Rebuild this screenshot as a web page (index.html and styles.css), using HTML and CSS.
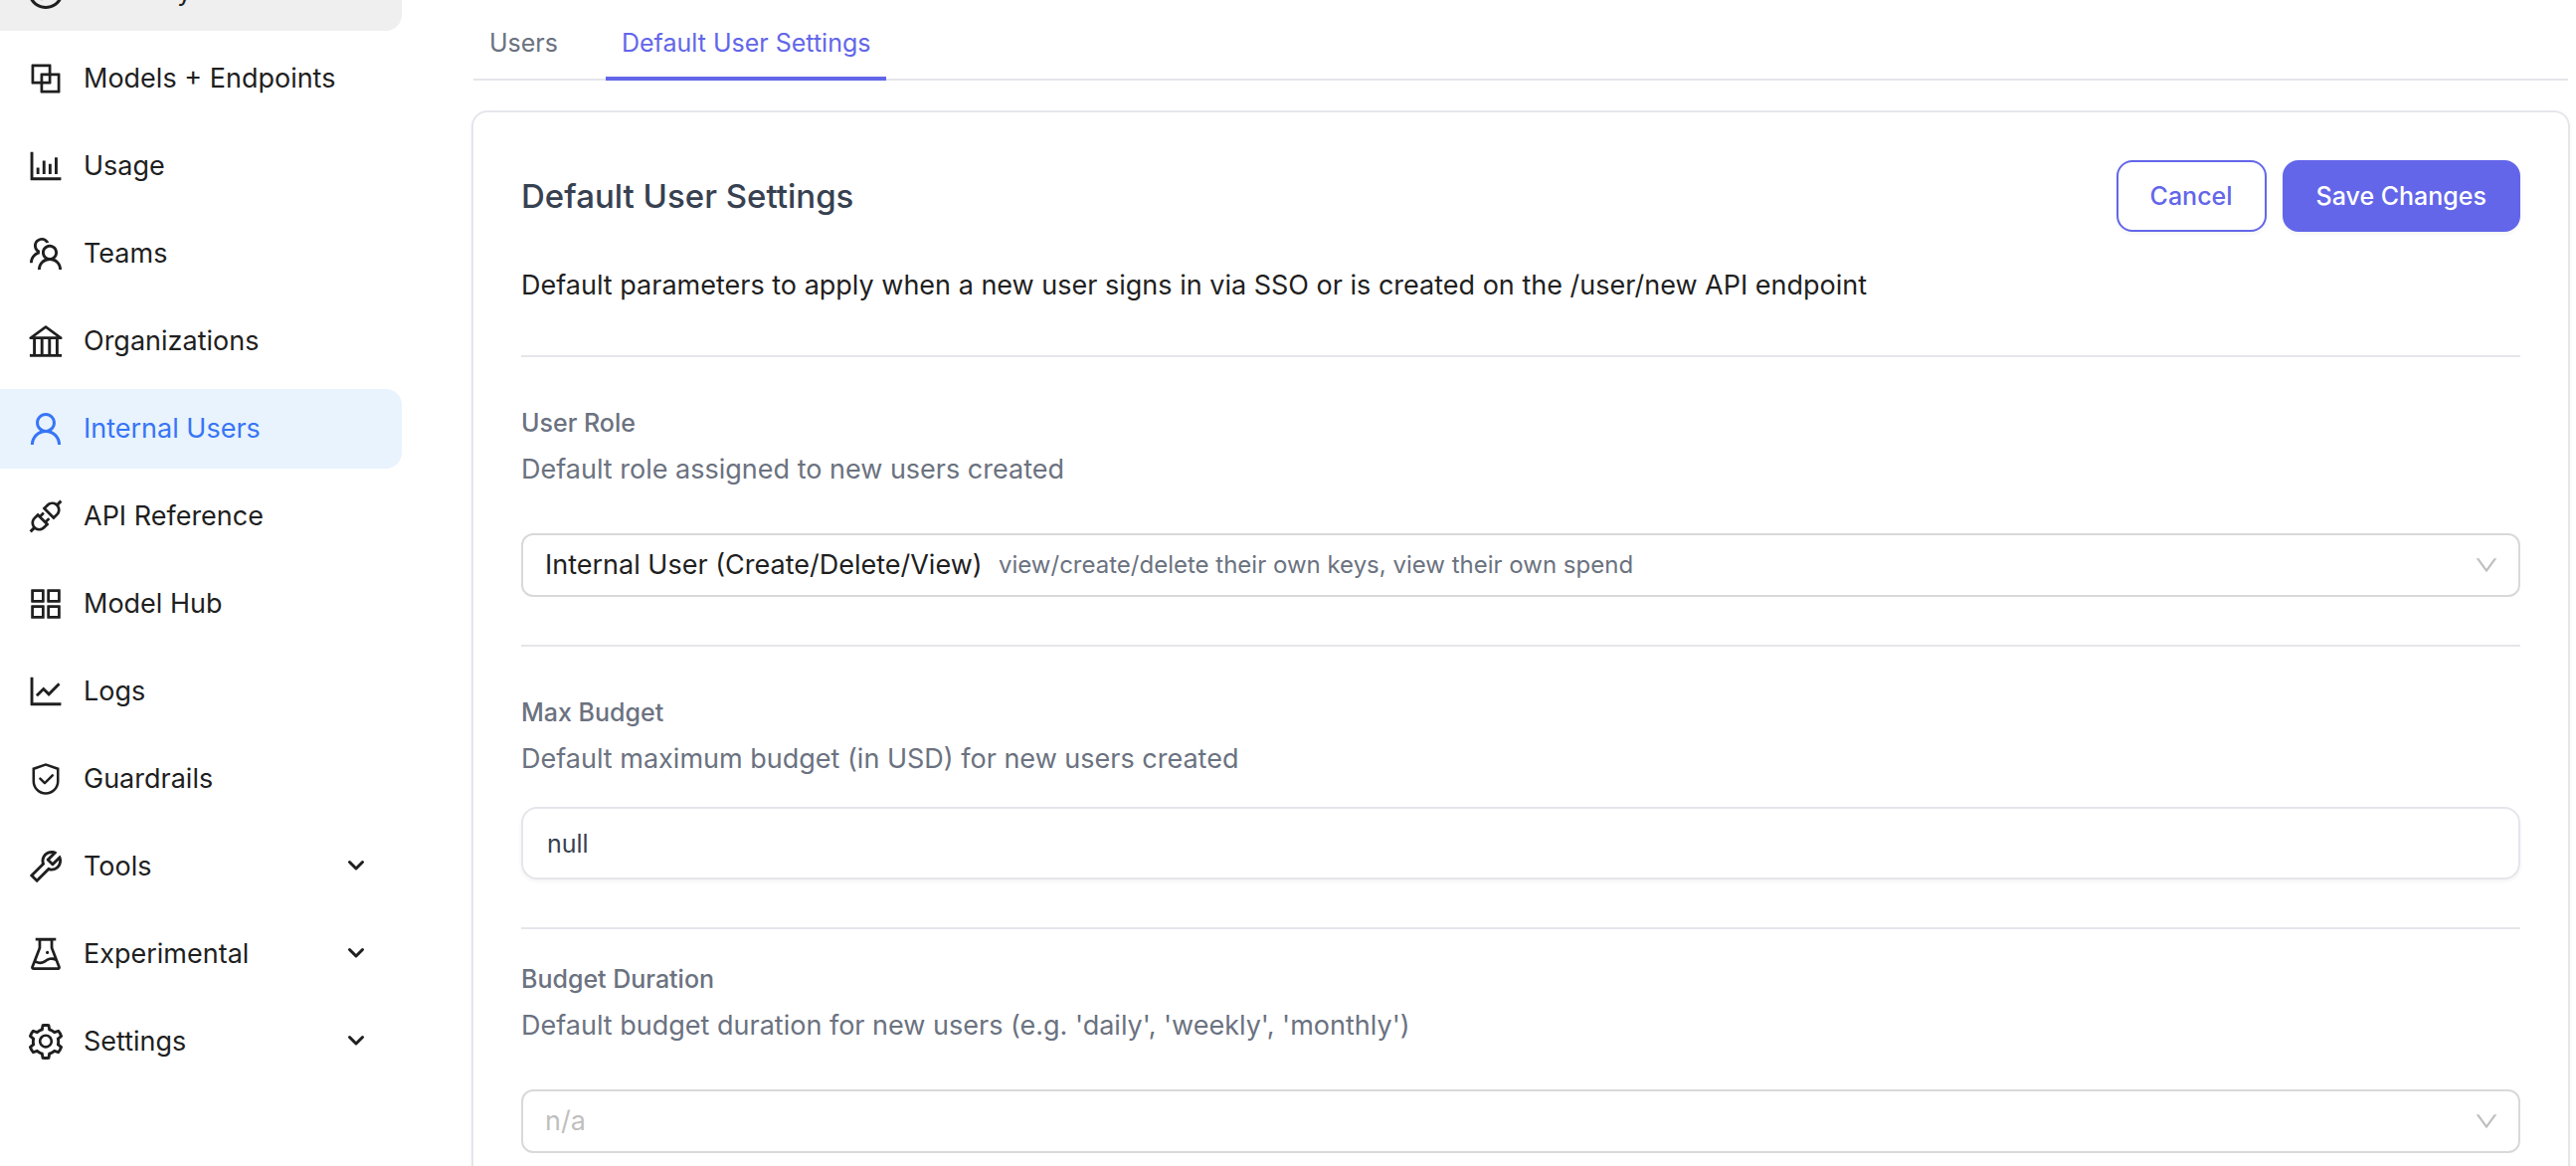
FILE: index.html
```html
<!DOCTYPE html>
<html lang="en">
<head>
<meta charset="utf-8">
<meta name="viewport" content="width=device-width, initial-scale=1">
<title>Default User Settings</title>
<link rel="stylesheet" href="styles.css">
</head>
<body>
<div class="app">
  <nav class="sidebar" aria-label="Main">
    <a class="nav-item nav-item-hover" href="#test-key">
      <svg class="icon" viewBox="64 64 896 896" aria-hidden="true"><path d="M512 64C264.600 64 64 264.600 64 512s200.600 448 448 448 448-200.600 448-448S759.400 64 512 64zm0 820c-205.400 0-372-166.600-372-372s166.600-372 372-372 372 166.600 372 372-166.600 372-372 372z"/><path d="M719.400 499.100l-296.100-215A15.900 15.900 0 00398 297v430c0 13.100 14.800 20.500 25.300 12.900l296.100-215a15.900 15.900 0 000-25.800zm-257.600 134V390.900L628.500 512 461.800 633.100z"/></svg>
      <span>Test Key</span>
    </a>
    <a class="nav-item" href="#models">
      <svg class="icon" viewBox="64 64 896 896" aria-hidden="true"><path d="M856 376H648V168c0-8.800-7.200-16-16-16H168c-8.800 0-16 7.200-16 16v464c0 8.800 7.200 16 16 16h208v208c0 8.800 7.200 16 16 16h464c8.800 0 16-7.200 16-16V392c0-8.800-7.200-16-16-16zm-480 16v188H220V220h360v156H392c-8.800 0-16 7.200-16 16zm204 52v136H444V444h136zm224 360H444V648h188c8.800 0 16-7.200 16-16V444h156v360z"/></svg>
      <span>Models + Endpoints</span>
    </a>
    <a class="nav-item" href="#usage">
      <svg class="icon" viewBox="64 64 896 896" aria-hidden="true"><path d="M888 792H200V168c0-4.400-3.600-8-8-8h-56c-4.400 0-8 3.600-8 8v688c0 4.400 3.600 8 8 8h752c4.400 0 8-3.600 8-8v-56c0-4.400-3.600-8-8-8zm-600-80h56c4.400 0 8-3.600 8-8V560c0-4.400-3.600-8-8-8h-56c-4.400 0-8 3.600-8 8v144c0 4.400 3.600 8 8 8zm152 0h56c4.400 0 8-3.600 8-8V384c0-4.400-3.600-8-8-8h-56c-4.400 0-8 3.600-8 8v320c0 4.400 3.600 8 8 8zm152 0h56c4.400 0 8-3.600 8-8V462c0-4.400-3.600-8-8-8h-56c-4.400 0-8 3.600-8 8v242c0 4.400 3.600 8 8 8zm152 0h56c4.400 0 8-3.600 8-8V304c0-4.400-3.600-8-8-8h-56c-4.400 0-8 3.600-8 8v400c0 4.400 3.600 8 8 8z"/></svg>
      <span>Usage</span>
    </a>
    <a class="nav-item" href="#teams">
      <svg class="icon" viewBox="64 64 896 896" aria-hidden="true"><path d="M824.2 699.9a301.55 301.55 0 00-86.400-60.400C783.100 602.800 812 546.800 812 484c0-110.800-92.400-201.700-203.200-200-109.100 1.700-197 90.600-197 200 0 62.800 29 118.800 74.200 155.500a300.95 300.95 0 00-86.400 60.400C345 754.600 314 826.800 312 903.800a8 8 0 008 8.200h56c4.300 0 7.900-3.400 8-7.700 1.900-58 25.400-112.300 66.700-153.500A226.62 226.62 0 01612 684c60.900 0 118.200 23.700 161.300 66.800C814.600 792 838 846.300 840 904.300c.1 4.300 3.700 7.700 8 7.700h56a8 8 0 008-8.200c-2-77-33-149.200-87.800-203.900zM612 612c-34.200 0-66.400-13.300-90.500-37.500a126.86 126.86 0 01-37.500-91.800c.3-32.800 13.400-64.500 36.300-88 24-24.600 56.100-38.300 90.400-38.700 33.900-.3 66.800 12.900 91 36.600 24.800 24.300 38.400 56.800 38.400 91.400 0 34.200-13.300 66.300-37.500 90.500A127.3 127.3 0 01612 612zM361.500 510.400c-.9-8.700-1.400-17.500-1.400-26.400 0-15.900 1.500-31.400 4.300-46.500.7-3.600-1.200-7.300-4.500-8.800-13.600-6.100-26.100-14.500-36.900-25.100a127.54 127.54 0 01-38.700-95.400c.9-32.100 13.800-62.600 36.300-85.600 24.700-25.300 57.900-39.100 93.200-38.700 31.900.3 62.700 12.600 86 34.400 7.900 7.400 14.700 15.600 20.400 24.400 2 3.100 5.900 4.400 9.300 3.200 17.600-6.100 36.200-10.400 55.300-12.400 5.600-.6 8.800-6.600 6.300-11.600-32.500-64.300-98.900-108.700-175.700-109.900-110.900-1.700-203.300 89.200-203.300 199.900 0 62.800 28.900 118.800 74.200 155.500-31.800 14.700-61.100 35-86.500 60.400-54.800 54.700-85.800 126.900-87.800 204a8 8 0 008 8.200h56.100c4.300 0 7.900-3.400 8-7.700 1.900-58 25.400-112.300 66.700-153.500 29.400-29.400 65.400-49.800 104.700-59.700 3.900-1 6.500-4.700 6-8.700z"/></svg>
      <span>Teams</span>
    </a>
    <a class="nav-item" href="#organizations">
      <svg class="icon" viewBox="64 64 896 896" aria-hidden="true"><path d="M894 462c30.900 0 43.800-39.700 18.700-58L530.800 126.200a31.81 31.81 0 00-37.600 0L111.300 404c-25.100 18.200-12.200 58 18.800 58H192v374h-72c-4.400 0-8 3.600-8 8v52c0 4.400 3.600 8 8 8h784c4.400 0 8-3.600 8-8v-52c0-4.400-3.600-8-8-8h-72V462h62zM512 196.700l271.100 197.200H240.900L512 196.700zM264 462h117v374H264V462zm189 0h117v374H453V462zm307 374H642V462h118v374z"/></svg>
      <span>Organizations</span>
    </a>
    <a class="nav-item nav-item-active" href="#internal-users" aria-current="page">
      <svg class="icon" viewBox="64 64 896 896" aria-hidden="true"><path d="M858.500 763.600a374 374 0 00-80.600-119.500 375.63 375.63 0 00-119.500-80.600c-.4-.2-.8-.3-1.200-.5C719.500 518 760 444.700 760 362c0-137-111-248-248-248S264 225 264 362c0 82.700 40.500 156 102.800 201.100-.4.2-.8.3-1.200.5-44.800 18.900-85 46-119.500 80.600a375.63 375.63 0 00-80.600 119.500A371.7 371.7 0 00136 901.800a8 8 0 008 8.200h60c4.400 0 7.900-3.500 8-7.800 2-77.200 33-149.500 87.800-204.300 56.700-56.700 132-87.900 212.200-87.900s155.500 31.200 212.200 87.900C779 752.700 810 825 812 902.200c.1 4.400 3.600 7.800 8 7.800h60a8 8 0 008-8.200c-1-47.800-10.900-94.300-29.500-138.200zM512 534c-45.900 0-89.100-17.900-121.600-50.400S340 407.900 340 362c0-45.900 17.900-89.100 50.400-121.600S466.100 190 512 190s89.100 17.900 121.600 50.400S684 316.100 684 362c0 45.900-17.900 89.100-50.400 121.600S557.900 534 512 534z"/></svg>
      <span>Internal Users</span>
    </a>
    <a class="nav-item" href="#api-reference">
      <svg class="icon" viewBox="64 64 896 896" aria-hidden="true"><path d="M917.700 148.800l-42.400-42.400c-1.600-1.600-3.600-2.300-5.700-2.300s-4.100.8-5.700 2.300l-76.100 76.100a199.27 199.27 0 00-112.100-34.300c-51.200 0-102.400 19.500-141.500 58.600L432.300 308.700a8.030 8.030 0 000 11.300L704 591.700c1.600 1.600 3.600 2.300 5.700 2.300 2 0 4.100-.8 5.700-2.300l101.900-101.900c68.900-69 77-175.700 24.300-253.500l76.100-76.100c3.100-3.200 3.100-8.300 0-11.400zM769.100 441.700l-59.400 59.400-186.800-186.800 59.400-59.400c24.900-24.900 58.100-38.700 93.400-38.700 35.300 0 68.400 13.700 93.400 38.700 24.900 24.900 38.700 58.100 38.700 93.400 0 35.300-13.800 68.400-38.700 93.400zm-190.200 105a8.030 8.030 0 00-11.300 0L501 613.300 410.700 523l66.700-66.700c3.100-3.100 3.100-8.200 0-11.300L441 408.600a8.030 8.030 0 00-11.300 0L363 475.300l-43-43a7.85 7.85 0 00-5.700-2.300c-2 0-4.100.8-5.700 2.300L206.800 534.200c-68.900 69-77 175.700-24.300 253.500l-76.100 76.100a8.030 8.030 0 000 11.300l42.400 42.400c1.600 1.600 3.600 2.300 5.700 2.300s4.100-.8 5.700-2.300l76.100-76.100c33.700 22.900 72.900 34.300 112.100 34.300 51.200 0 102.400-19.500 141.500-58.600l101.900-101.900c3.100-3.100 3.100-8.200 0-11.300l-43-43 66.700-66.700c3.100-3.100 3.100-8.200 0-11.300l-36.600-36.200zM441.700 769.100a131.32 131.32 0 01-93.400 38.700c-35.300 0-68.400-13.700-93.400-38.700a131.32 131.32 0 01-38.700-93.400c0-35.300 13.700-68.400 38.700-93.400l59.400-59.400 186.800 186.800-59.400 59.400z"/></svg>
      <span>API Reference</span>
    </a>
    <a class="nav-item" href="#model-hub">
      <svg class="icon" viewBox="64 64 896 896" aria-hidden="true"><path fill-rule="evenodd" d="M160 144h304q16 0 16 16v304q0 16-16 16H160q-16 0-16-16V160q0-16 16-16zm52 68v200h200V212zM560 144h304q16 0 16 16v304q0 16-16 16H560q-16 0-16-16V160q0-16 16-16zm52 68v200h200V212zM160 544h304q16 0 16 16v304q0 16-16 16H160q-16 0-16-16V560q0-16 16-16zm52 68v200h200V612zM560 544h304q16 0 16 16v304q0 16-16 16H560q-16 0-16-16V560q0-16 16-16zm52 68v200h200V612z"/></svg>
      <span>Model Hub</span>
    </a>
    <a class="nav-item" href="#logs">
      <svg class="icon" viewBox="64 64 896 896" aria-hidden="true"><path d="M888 792H200V168c0-4.400-3.600-8-8-8h-56c-4.400 0-8 3.600-8 8v688c0 4.400 3.600 8 8 8h752c4.400 0 8-3.600 8-8v-56c0-4.400-3.600-8-8-8zM305.800 637.700c3.100 3.100 8.100 3.100 11.300 0l138.300-137.600L583 628.500c3.100 3.100 8.200 3.100 11.300 0l275.400-275.300c3.100-3.100 3.100-8.200 0-11.300l-39.600-39.600a8.030 8.030 0 00-11.300 0l-230 229.900L461.400 404a8.030 8.030 0 00-11.300 0L266.300 586.700a8.030 8.030 0 000 11.300l39.500 39.700z"/></svg>
      <span>Logs</span>
    </a>
    <a class="nav-item" href="#guardrails">
      <svg class="icon" viewBox="0 0 1024 1024" aria-hidden="true"><path d="M512 64L128 192v384c0 212.100 171.900 384 384 384s384-171.900 384-384V192L512 64zm312 512c0 172.300-139.700 312-312 312S200 748.300 200 576V246l312-110 312 110v330z"/><path d="M378.400 475.100a35.91 35.91 0 00-50.900 0 35.91 35.91 0 000 50.900l129.400 129.400 2.100 2.100a33.98 33.98 0 0048.100 0L730.600 434a33.98 33.98 0 000-48.100l-2.800-2.800a33.98 33.98 0 00-48.100 0L483 579.700 378.400 475.100z"/></svg>
      <span>Guardrails</span>
    </a>
    <button class="nav-item" type="button" aria-expanded="false">
      <svg class="icon" viewBox="64 64 896 896" aria-hidden="true"><path d="M876.600 239.500c-.5-.9-1.200-1.800-2-2.500-5-5-13.100-5-18.100 0L684.200 409.300l-67.900-67.900L788.700 169c.8-.8 1.400-1.600 2-2.500 3.600-6.100 1.600-13.900-4.500-17.500-98.200-58-226.800-44.700-311.300 39.700-67 67-89.200 162-66.500 247.400l-293 293c-3 3-2.800 7.900.3 11l169.700 169.700c3.100 3.100 8.100 3.300 11 .3l292.900-292.900c85.500 22.800 180.500.7 247.600-66.400 84.400-84.500 97.700-213.100 39.700-311.300zM786 499.800c-58.100 58.100-145.300 69.300-214.600 33.600l-8.800 8.800-.1-.1-274 274.100-79.200-79.200 230.100-230.100s0 .1.1.1l52.800-52.800c-35.700-69.300-24.500-156.500 33.600-214.600a184.2 184.2 0 01144-53.500L537 318.900a32.05 32.05 0 000 45.300l124.500 124.500a32.05 32.05 0 0045.300 0l132.800-132.800c3.700 51.800-14.400 104.800-53.600 143.900z"/></svg>
      <span>Tools</span>
      <svg class="caret" viewBox="0 0 20 20" aria-hidden="true"><path d="M3.500 5.500L10 12l6.500-6.500"/></svg>
    </button>
    <button class="nav-item" type="button" aria-expanded="false">
      <svg class="icon" viewBox="64 64 896 896" aria-hidden="true"><path d="M512 472a40 40 0 1080 0 40 40 0 10-80 0zm367 352.900L696.300 352V178H768v-68H256v68h71.700v174L145 824.900c-2.800 7.400-4.300 15.200-4.300 23.100 0 35.300 28.700 64 64 64h614.600c7.900 0 15.700-1.500 23.100-4.300 33-12.700 49.400-49.800 36.600-82.800zM395.700 364.700V180h232.600v184.700L719.200 600c-20.700-5.300-42.100-8-63.900-8-61.200 0-119.200 21.500-165.300 60a188.78 188.78 0 01-121.300 43.900c-32.700 0-64.100-8.300-91.800-23.700l118.800-307.500zM210.500 844l41.700-107.800c35.700 18.100 75.400 27.800 116.600 27.800 61.200 0 119.200-21.500 165.300-60 33.900-28.200 76.300-43.900 121.300-43.900 35 0 68.400 9.500 97.600 27.100L813.500 844h-603z"/></svg>
      <span>Experimental</span>
      <svg class="caret" viewBox="0 0 20 20" aria-hidden="true"><path d="M3.500 5.500L10 12l6.500-6.500"/></svg>
    </button>
    <button class="nav-item" type="button" aria-expanded="false">
      <svg class="icon" viewBox="64 64 896 896" aria-hidden="true"><path d="M924.800 625.700l-65.500-56c3.100-19 4.700-38.400 4.700-57.800s-1.600-38.800-4.700-57.800l65.500-56a32.03 32.03 0 009.300-35.200l-.9-2.600a443.74 443.74 0 00-79.700-137.900l-1.800-2.100a32.12 32.12 0 00-35.100-9.500l-81.300 28.900c-30-24.600-63.500-44-99.700-57.600l-15.700-85a32.05 32.05 0 00-25.800-25.700l-2.700-.5c-52.100-9.400-106.900-9.400-159 0l-2.700.5a32.05 32.05 0 00-25.800 25.700l-15.800 85.400a351.86 351.86 0 00-99 57.400l-81.900-29.100a32 32 0 00-35.100 9.500l-1.800 2.100a446.02 446.02 0 00-79.700 137.900l-.9 2.600c-4.500 12.500-.8 26.500 9.300 35.200l66.300 56.600c-3.100 18.800-4.600 38-4.600 57.100 0 19.200 1.500 38.400 4.600 57.100L99 625.500a32.03 32.03 0 00-9.300 35.200l.9 2.600c18.100 50.400 44.900 96.900 79.700 137.900l1.800 2.100a32.12 32.12 0 0035.100 9.500l81.900-29.100c29.800 24.500 63.100 43.900 99 57.400l15.800 85.400a32.05 32.05 0 0025.800 25.700l2.700.5a449.4 449.4 0 00159 0l2.700-.5a32.05 32.05 0 0025.800-25.700l15.700-85a350 350 0 0099.700-57.600l81.300 28.900a32 32 0 0035.100-9.500l1.800-2.100c34.800-41.100 61.600-87.500 79.700-137.900l.9-2.600c4.500-12.300.8-26.300-9.300-35zM788.300 465.900c2.500 15.100 3.800 30.600 3.800 46.100s-1.300 31-3.800 46.100l-6.600 40.100 74.700 63.900a370.03 370.03 0 01-42.600 73.600L721 702.800l-31.400 25.800c-23.900 19.600-50.500 35-79.300 45.800l-38.100 14.300-17.900 97a377.5 377.5 0 01-85 0l-17.900-97.200-37.800-14.500c-28.500-10.800-55-26.200-78.700-45.700l-31.400-25.900-93.400 33.200c-17-22.900-31.200-47.600-42.600-73.600l75.500-64.500-6.500-40c-2.400-14.900-3.700-30.300-3.700-45.500 0-15.300 1.200-30.600 3.700-45.500l6.500-40-75.500-64.500c11.300-26.100 25.600-50.700 42.600-73.600l93.400 33.200 31.400-25.900c23.700-19.500 50.200-34.900 78.700-45.700l37.900-14.300 17.900-97.200c28.100-3.200 56.800-3.200 85 0l17.900 97 38.100 14.300c28.700 10.800 55.400 26.200 79.300 45.800l31.400 25.800 92.800-32.900c17 22.900 31.200 47.600 42.600 73.600L781.800 426l6.500 39.900zM512 326c-97.200 0-176 78.800-176 176s78.800 176 176 176 176-78.800 176-176-78.800-176-176-176zm79.200 255.200A111.6 111.6 0 01512 614c-29.900 0-58-11.700-79.200-32.800A111.6 111.6 0 01400 502c0-29.900 11.700-58 32.800-79.200C454 401.600 482.100 390 512 390c29.900 0 58 11.600 79.200 32.800A111.6 111.6 0 01624 502c0 29.900-11.700 58-32.800 79.200z"/></svg>
      <span>Settings</span>
      <svg class="caret" viewBox="0 0 20 20" aria-hidden="true"><path d="M3.500 5.500L10 12l6.500-6.500"/></svg>
    </button>
  </nav>

  <main class="main">
    <div class="tabs" role="tablist">
      <button class="tab" type="button" role="tab" aria-selected="false">Users</button>
      <button class="tab tab-active" type="button" role="tab" aria-selected="true">Default User Settings</button>
    </div>

    <form class="card">
      <header class="card-header">
        <h1 class="card-title">Default User Settings</h1>
        <div class="actions">
          <button class="btn btn-secondary" type="button">Cancel</button>
          <button class="btn btn-primary" type="submit">Save Changes</button>
        </div>
      </header>
      <p class="intro">Default parameters to apply when a new user signs in via SSO or is created on the /user/new API endpoint</p>

      <section class="field">
        <label class="label" for="user-role">User Role</label>
        <p class="description">Default role assigned to new users created</p>
        <div class="select-box">
          <select class="select" id="user-role">
            <option>Internal User (Create/Delete/View)</option>
          </select>
          <span class="hint">view/create/delete their own keys, view their own spend</span>
          <svg class="arrow" viewBox="64 64 896 896" aria-hidden="true"><path d="M884 256h-75c-5.100 0-9.900 2.500-12.900 6.600L512 654.200 227.900 262.600c-3-4.100-7.800-6.600-12.900-6.600h-75c-6.500 0-10.300 7.400-6.500 12.700l352.600 486.100c12.800 17.600 39 17.600 51.700 0l352.600-486.100c3.900-5.300.1-12.700-6.400-12.700z"/></svg>
        </div>
      </section>

      <section class="field">
        <label class="label" for="max-budget">Max Budget</label>
        <p class="description">Default maximum budget (in USD) for new users created</p>
        <input class="input" id="max-budget" type="text" value="null">
      </section>

      <section class="field field-compact">
        <label class="label" for="budget-duration">Budget Duration</label>
        <p class="description">Default budget duration for new users (e.g. 'daily', 'weekly', 'monthly')</p>
        <div class="select-box">
          <select class="select select-empty" id="budget-duration">
            <option>n/a</option>
          </select>
          <svg class="arrow" viewBox="64 64 896 896" aria-hidden="true"><path d="M884 256h-75c-5.100 0-9.900 2.500-12.900 6.600L512 654.200 227.900 262.600c-3-4.100-7.800-6.600-12.900-6.600h-75c-6.500 0-10.300 7.400-6.500 12.700l352.600 486.100c12.800 17.600 39 17.600 51.700 0l352.600-486.100c3.900-5.300.1-12.700-6.400-12.700z"/></svg>
        </div>
      </section>
    </form>
  </main>
</div>
</body>
</html>
```
FILE: styles.css
```css
*,
*::before,
*::after {
  box-sizing: border-box;
}

body {
  margin: 0;
  background: #fff;
  color: #1f1f1f;
  font-family: Inter, "Liberation Sans", sans-serif;
  font-size: 27px;
  line-height: 44px;
}

h1,
p {
  margin: 0;
}

button,
input,
select {
  font: inherit;
  color: inherit;
}

.app {
  display: flex;
  align-items: flex-start;
  gap: 70px;
  height: 100vh;
  overflow: hidden;
}

/* The list is scrolled: its first entry is partly above the window. */
.sidebar {
  display: flex;
  flex: 0 0 404px;
  flex-direction: column;
  gap: 8px;
  margin-top: -49px;
}

.nav-item {
  display: flex;
  align-items: center;
  gap: 20px;
  height: 80px;
  padding: 0 36px 0 28px;
  border: 0;
  border-radius: 0 16px 16px 0;
  background: none;
  color: #1f1f1f;
  text-align: left;
  text-decoration: none;
}

.nav-item-hover {
  background: #efefef;
}

.nav-item-active {
  background: #e8f3fe;
  color: #3875f6;
}

.icon {
  width: 36px;
  height: 36px;
  fill: currentColor;
}

.caret {
  width: 20px;
  height: 20px;
  margin-left: auto;
  fill: none;
  stroke: currentColor;
  stroke-width: 3;
  stroke-linecap: round;
  stroke-linejoin: round;
}

.main {
  flex: 1;
  min-width: 0;
  padding-right: 6px;
}

.tabs {
  display: flex;
  gap: 32px;
  margin: 0 2px 30px;
  border-bottom: 2px solid #e5e6eb;
}

.tab {
  height: 81px;
  margin-bottom: -2px;
  padding: 8px 16px 0;
  border: 0;
  border-bottom: 4px solid transparent;
  background: none;
  color: #6b7280;
  font-size: 25px;
  line-height: 40px;
}

.tab-active {
  border-bottom-color: #6366e9;
  color: #6366e9;
}

.card {
  padding: 48px;
  border: 2px solid #e5e6eb;
  border-radius: 16px;
  box-shadow: 0 2px 4px rgba(0, 0, 0, 0.05);
}

.card-header {
  display: flex;
  align-items: center;
  justify-content: space-between;
}

.card-title {
  color: #374151;
  font-size: 33px;
  font-weight: 500;
}

.actions {
  display: flex;
  gap: 16px;
}

.btn {
  height: 72px;
  padding: 0 32px;
  border: 2px solid #6366e9;
  border-radius: 16px;
  box-shadow: 0 2px 4px rgba(0, 0, 0, 0.05);
  font-size: 25px;
  font-weight: 500;
}

.btn-secondary {
  background: #fff;
  color: #6366e9;
}

.btn-primary {
  background: #6366e9;
  color: #fff;
}

.intro {
  margin: 32px 0 48px;
}

.field {
  padding: 48px 0;
  border-top: 2px solid #e5e6eb;
}

.field-compact {
  padding-top: 32px;
}

.label {
  display: block;
  color: #6b7280;
  font-size: 25px;
  font-weight: 500;
  line-height: 36px;
}

.description {
  margin-top: 8px;
  color: #6b7280;
  line-height: 42px;
}

.select-box {
  display: flex;
  align-items: center;
  height: 64px;
  margin-top: 43px;
  padding: 0 20px 0 22px;
  border: 2px solid #d9d9d9;
  border-radius: 12px;
}

.select {
  padding: 0;
  border: 0;
  appearance: none;
  background: none;
  color: #1f1f1f;
  line-height: 44px;
}

.select-empty {
  flex: 1;
  color: #bfbfbf;
}

.hint {
  margin-left: 16px;
  color: #6b7280;
  font-size: 24px;
}

.arrow {
  width: 24px;
  height: 24px;
  margin-left: auto;
  fill: #bfbfbf;
}

.input {
  display: block;
  width: 100%;
  height: 73px;
  margin-top: 27px;
  padding: 0 24px;
  border: 2px solid #e5e6eb;
  border-radius: 16px;
  box-shadow: 0 2px 4px rgba(0, 0, 0, 0.05);
  background: #fff;
  color: #374151;
  font-size: 25px;
}
```
